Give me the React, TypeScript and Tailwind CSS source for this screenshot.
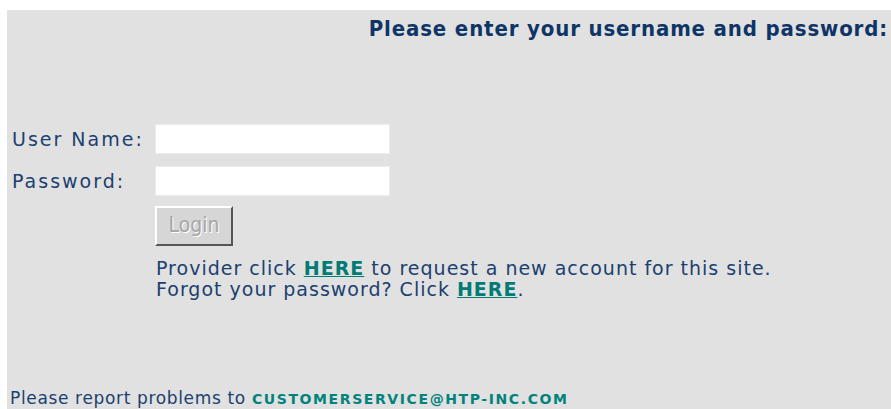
import React from 'react';

const textFont = { fontFamily: '"DejaVu Sans", Verdana, sans-serif' };

export default function App() {
  return (
    <div className="w-[891px] h-[409px] bg-white pl-[7px] pt-[10px] overflow-hidden" style={textFont}>
      <div className="h-[399px] bg-[#e1e1e1] text-[#1b3f6f] flex flex-col">
        {/* heading */}
        <div className="h-[36px] flex items-center justify-end pr-[3px]">
          <h1
            className="text-[22px] font-bold tracking-[0.85px] text-[#0f3567]"
            style={{ fontFamily: '"DejaVu Sans Condensed", "DejaVu Sans", sans-serif', fontStretch: 'condensed' }}
          >
            Please enter your username and password:
          </h1>
        </div>

        {/* login form */}
        <div className="mt-[78px] pl-[5px] flex flex-col gap-[12px]">
          <div className="flex items-center">
            <label className="w-[143px] text-[19px] tracking-[2px]">User Name:</label>
            <input type="text" className="w-[235px] h-[30px] bg-white border border-[#ececec] outline-none" />
          </div>
          <div className="flex items-center">
            <label className="w-[143px] text-[19px] tracking-[2px]">Password:</label>
            <input type="password" className="w-[235px] h-[30px] bg-white border border-[#ececec] outline-none" />
          </div>
          <div className="pl-[143px] -mt-[2px]">
            <button
              disabled
              className="w-[78px] h-[40px] bg-[#d6d6d6] text-[#a6a6a6] text-[21px] [text-shadow:1px_1px_0_#ffffff] border-t-2 border-l-2 border-t-white border-l-white border-r-2 border-b-2 border-r-[#555] border-b-[#555]"
              style={{ fontFamily: 'Tahoma, "DejaVu Sans Condensed", "DejaVu Sans", sans-serif' }}
            >
              Login
            </button>
          </div>
        </div>

        <div className="pl-[149px] mt-[12px] text-[19px] tracking-[1px] leading-[21px]">
          <p>
            Provider click{' '}
            <a href="#" className="font-bold text-[#007b76] underline">HERE</a>{' '}
            to request a new account for this site.
          </p>
          <p>
            Forgot your password? Click{' '}
            <a href="#" className="font-bold text-[#007b76] underline">HERE</a>.
          </p>
        </div>

        <div className="mt-auto mb-0 pl-[3px] text-[17px] tracking-[0.65px] leading-[20px]">
          Please report problems to{' '}
          <a href="#" className="font-bold text-[#00837c] text-[14px] tracking-[1.6px]">
            CUSTOMERSERVICE@HTP-INC.COM
          </a>
        </div>
      </div>
    </div>
  );
}
